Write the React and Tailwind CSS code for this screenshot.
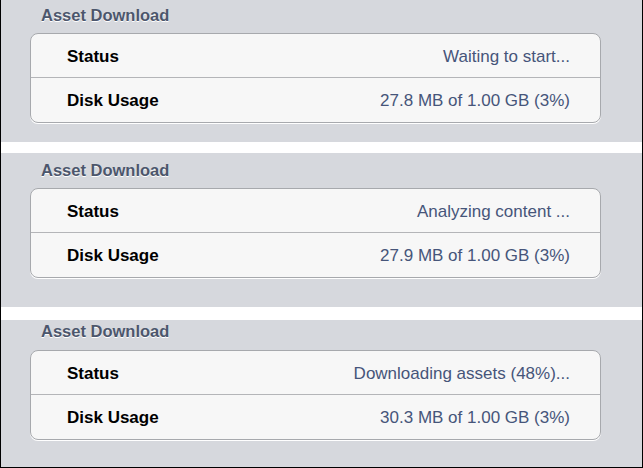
const panels = [
  {
    id: 1,
    status: 'Waiting to start...',
    disk: '27.8 MB of 1.00 GB (3%)',
    box: 'h-[142px] pt-[5px]',
    gap: 'mt-[8px]',
  },
  {
    id: 2,
    status: 'Analyzing content ...',
    disk: '27.9 MB of 1.00 GB (3%)',
    box: 'h-[154px] pt-[7px]',
    gap: 'mt-[8px]',
  },
  {
    id: 3,
    status: 'Downloading assets (48%)...',
    disk: '30.3 MB of 1.00 GB (3%)',
    box: 'h-[147px] pt-[1px]',
    gap: 'mt-[9px]',
  },
];

export default function App() {
  return (
    <div className="w-[643px] h-[468px] bg-white border-x border-b border-black overflow-hidden flex flex-col font-['Liberation_Sans',Arial,Helvetica,sans-serif]">
      <Panel panel={panels[0]} />
      <div className="h-[11px] bg-white" />
      <Panel panel={panels[1]} />
      <div className="h-[13px] bg-white" />
      <Panel panel={panels[2]} />
    </div>
  );
}

function Panel({ panel }) {
  return (
    <div className={`shrink-0 bg-[#d6d8dd] ${panel.box}`}>
      {/* Section header */}
      <div className="h-[20px] pl-[40px] text-[16.5px] leading-[20px] font-bold text-[#4c566c] [text-shadow:0_1px_0_#ffffff]">
        Asset Download
      </div>

      {/* Grouped table */}
      <div className={`${panel.gap} ml-[29px] w-[571px] rounded-[8px] border border-[#a7a9ad] bg-[#f7f7f7] shadow-[0_1px_0_#ffffff] overflow-hidden`}>
        <Row label="Status" value={panel.status} className="h-[43px]" />
        <Row label="Disk Usage" value={panel.disk} className="h-[45px] border-t border-[#b4b5b8]" />
      </div>
    </div>
  );
}

function Row({ label, value, className }) {
  return (
    <div className={`flex items-center justify-between pt-[2px] pl-[36px] pr-[30px] text-[17px] leading-[20px] ${className}`}>
      <span className="font-bold text-black">{label}</span>
      <span className="text-[#46557a]">{value}</span>
    </div>
  );
}
